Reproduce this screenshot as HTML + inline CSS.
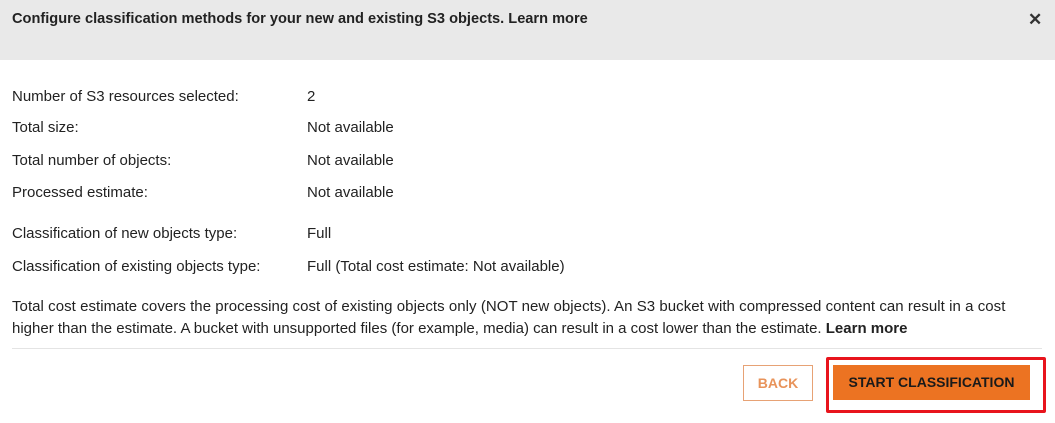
<!DOCTYPE html>
<html><head><style>
body{margin:0;width:1055px;height:423px;overflow:hidden;background:#fff;font-family:"Liberation Sans",sans-serif;color:#222;font-size:15px;position:relative}
.hdr{position:absolute;left:0;top:0;width:1055px;height:60px;background:#e9e9e9}
.t{position:absolute;white-space:nowrap}
.b{font-weight:bold}
</style></head><body>
<div class="hdr"></div>
<div class="t b" style="left:12px;top:11px;font-size:14.6px;color:#222">Configure classification methods for your new and existing S3 objects. Learn more</div>
<div class="t" style="left:1028px;top:10px;font-size:17px;color:#333;font-weight:bold">✕</div>
<div class="t" style="left:12px;top:88px">Number of S3 resources selected:</div><div class="t" style="left:307px;top:88px">2</div>
<div class="t" style="left:12px;top:119px">Total size:</div><div class="t" style="left:307px;top:119px">Not available</div>
<div class="t" style="left:12px;top:152px">Total number of objects:</div><div class="t" style="left:307px;top:152px">Not available</div>
<div class="t" style="left:12px;top:184px">Processed estimate:</div><div class="t" style="left:307px;top:184px">Not available</div>
<div class="t" style="left:12px;top:225px">Classification of new objects type:</div><div class="t" style="left:307px;top:225px">Full</div>
<div class="t" style="left:12px;top:258px">Classification of existing objects type:</div><div class="t" style="left:307px;top:258px">Full (Total cost estimate: Not available)</div>
<div class="t" style="left:12px;top:298px;letter-spacing:0.05px">Total cost estimate covers the processing cost of existing objects only (NOT new objects). An S3 bucket with compressed content can result in a cost</div>
<div class="t" style="left:12px;top:320px">higher than the estimate. A bucket with unsupported files (for example, media) can result in a cost lower than the estimate. <b>Learn more</b></div>
<div style="position:absolute;left:12px;top:348px;width:1030px;height:1px;background:#e4e4e4"></div>
<div style="position:absolute;left:743px;top:365px;width:70px;height:36px;border:1px solid #e7a275;box-sizing:border-box;color:#e8935a;font-weight:bold;font-size:14px;text-align:center;line-height:34px">BACK</div>
<div style="position:absolute;left:826px;top:357px;width:220px;height:56px;border:3px solid #e8141c;border-radius:2px;box-sizing:border-box"></div>
<div style="position:absolute;left:833px;top:365px;width:197px;height:35px;background:#ec7322;color:#1a1a1a;font-weight:bold;font-size:14px;text-align:center;line-height:35px">START CLASSIFICATION</div>
</body></html>
